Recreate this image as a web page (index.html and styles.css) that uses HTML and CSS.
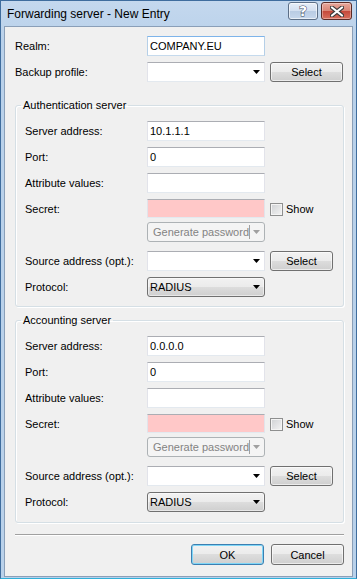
FILE: index.html
```html
<!DOCTYPE html>
<html lang="en">
<head>
  <meta charset="UTF-8" />
  <title>Forwarding server - New Entry</title>
  <link rel="stylesheet" href="styles.css">
</head>
<body>
  <div class="window">
    <div class="titlebar">
      <span class="title">Forwarding server - New Entry</span>
      <div class="caption-buttons">
        <button class="cap help">?</button>
        <button class="cap close">
          <svg width="14" height="11" viewBox="0 0 14 11">
            <path d="M2 1.5L12 9.5M12 1.5L2 9.5" stroke="#3a3a3a" stroke-width="4.2" stroke-linecap="round"/>
            <path d="M2 1.5L12 9.5M12 1.5L2 9.5" stroke="#fff" stroke-width="2.2" stroke-linecap="round"/>
          </svg>
        </button>
      </div>
    </div>

    <div class="client">
      <div class="row first">
        <label class="lbl-top">Realm:</label>
        <div class="textbox focused">COMPANY.EU</div>
      </div>
      <div class="row">
        <label class="lbl-top">Backup profile:</label>
        <div class="textbox combo"><span></span><svg class="arrow" width="7" height="4"><path d="M0 0h7l-3.5 4z" fill="#000"/></svg></div>
        <button class="btn select-wide">Select</button>
      </div>

      <fieldset class="group">
        <legend>Authentication server</legend>
        <div class="row first">
          <label class="lbl">Server address:</label>
          <div class="textbox">10.1.1.1</div>
        </div>
        <div class="row">
          <label class="lbl">Port:</label>
          <div class="textbox">0</div>
        </div>
        <div class="row">
          <label class="lbl">Attribute values:</label>
          <div class="textbox"></div>
        </div>
        <div class="row">
          <label class="lbl">Secret:</label>
          <div class="textbox secret"></div>
          <span class="checkbox"></span>
          <span class="check-label">Show</span>
        </div>
        <div class="row gen-row">
          <span class="lbl"></span>
          <div class="split">
            <span class="split-text">Generate password</span>
            <span class="split-sep"></span>
            <svg class="arrow" width="7" height="4"><path d="M0 0h7l-3.5 4z" fill="#a0a0a0"/></svg>
          </div>
        </div>
        <div class="row source-row">
          <label class="lbl">Source address (opt.):</label>
          <div class="textbox combo"><span></span><svg class="arrow" width="7" height="4"><path d="M0 0h7l-3.5 4z" fill="#000"/></svg></div>
          <button class="btn select">Select</button>
        </div>
        <div class="row">
          <label class="lbl">Protocol:</label>
          <div class="dropdown"><span>RADIUS</span><svg class="arrow" width="7" height="4"><path d="M0 0h7l-3.5 4z" fill="#000"/></svg></div>
        </div>
      </fieldset>

      <fieldset class="group second">
        <legend>Accounting server</legend>
        <div class="row first">
          <label class="lbl">Server address:</label>
          <div class="textbox">0.0.0.0</div>
        </div>
        <div class="row">
          <label class="lbl">Port:</label>
          <div class="textbox">0</div>
        </div>
        <div class="row">
          <label class="lbl">Attribute values:</label>
          <div class="textbox"></div>
        </div>
        <div class="row">
          <label class="lbl">Secret:</label>
          <div class="textbox secret"></div>
          <span class="checkbox"></span>
          <span class="check-label">Show</span>
        </div>
        <div class="row gen-row">
          <span class="lbl"></span>
          <div class="split">
            <span class="split-text">Generate password</span>
            <span class="split-sep"></span>
            <svg class="arrow" width="7" height="4"><path d="M0 0h7l-3.5 4z" fill="#a0a0a0"/></svg>
          </div>
        </div>
        <div class="row source-row">
          <label class="lbl">Source address (opt.):</label>
          <div class="textbox combo"><span></span><svg class="arrow" width="7" height="4"><path d="M0 0h7l-3.5 4z" fill="#000"/></svg></div>
          <button class="btn select">Select</button>
        </div>
        <div class="row">
          <label class="lbl">Protocol:</label>
          <div class="dropdown"><span>RADIUS</span><svg class="arrow" width="7" height="4"><path d="M0 0h7l-3.5 4z" fill="#000"/></svg></div>
        </div>
      </fieldset>

      <div class="separator"></div>

      <div class="actions">
        <button class="btn default">OK</button>
        <button class="btn">Cancel</button>
      </div>
    </div>
  </div>
</body>
</html>
```

FILE: styles.css
```css
* {
  box-sizing: border-box;
}

body {
  margin: 0;
  font-family: 'Liberation Sans', Arial, sans-serif;
  font-size: 11px;
  color: #000;
  background: #fff;
}

.window {
  width: 357px;
  height: 579px;
  display: flex;
  flex-direction: column;
  background: linear-gradient(#c4d8ee, #b9d1ea 40px);
  border: 1px solid #3f6d9e;
  border-bottom-color: #2fb0da;
  padding: 0 3px 1px 3px;
}

/* title bar */
.titlebar {
  height: 25px;
  display: flex;
  align-items: center;
  justify-content: space-between;
  padding: 0 1px 0 3px;
}

.title {
  font-size: 12px;
  color: #000;
}

.caption-buttons {
  display: flex;
  gap: 3px;
  align-self: flex-start;
  margin-top: 1px;
}

.cap {
  height: 18px;
  border: 1px solid #5c6f87;
  border-radius: 3px;
  padding: 0;
  display: flex;
  align-items: center;
  justify-content: center;
  font-family: 'DejaVu Sans', sans-serif;
}

.help {
  width: 30px;
  background: linear-gradient(#e6eef8 0%, #d2dff0 50%, #b8cbe3 50%, #c6d7ec 100%);
  box-shadow: inset 0 0 0 1px rgba(255, 255, 255, 0.6);
  color: #fff;
  font-size: 14px;
  font-weight: bold;
  -webkit-text-stroke: 1px #3c4b5e;
  paint-order: stroke fill;
}

.close {
  width: 31px;
  border-color: #5a2a25;
  background: linear-gradient(#e8a89c 0%, #d98474 50%, #c4483a 50%, #d8705e 100%);
  box-shadow: inset 0 0 0 1px rgba(255, 255, 255, 0.35);
}

/* client area */
.client {
  flex: 1;
  background: #f0f0f0;
  border: 1px solid #8a9fb8;
  padding: 9px 8px 0 10px;
}

.row {
  display: flex;
  align-items: center;
  height: 20px;
  margin-top: 6px;
}

.row.first {
  margin-top: 0;
}

.gen-row {
  margin-top: 3px;
}

.source-row {
  margin-top: 9px;
}

.lbl-top {
  width: 132px;
  flex-shrink: 0;
}

.lbl {
  width: 122px;
  flex-shrink: 0;
}

.textbox {
  width: 118px;
  height: 20px;
  border: 1px solid;
  border-color: #abadb3 #e2e3ea #e3e9ef #e2e3ea;
  background: #fff;
  padding: 0 2px;
  display: flex;
  align-items: center;
}

.textbox.focused {
  border-color: #7eb4ea #b5cfe7 #c5daed #b5cfe7;
}

.textbox.secret {
  background: #ffc8c8;
  height: 19px;
  align-self: flex-start;
}

.combo {
  justify-content: space-between;
  padding-right: 4px;
}

.arrow {
  display: block;
}

.checkbox {
  width: 13px;
  height: 13px;
  margin-left: 5px;
  border: 1px solid #8e8f8f;
  background: linear-gradient(135deg, #cfd1d4, #f4f4f4);
  box-shadow: inset 0 0 0 1px #f4f4f4;
  margin-top: 1px;
}

.check-label {
  margin-left: 3px;
}

.split {
  width: 118px;
  height: 20px;
  border: 1px solid #adb2b5;
  border-radius: 3px;
  background: #f4f4f4;
  color: #838383;
  display: flex;
  align-items: center;
  padding: 0 4px 0 5px;
}

.split-text {
  flex: 1;
}

.split-sep {
  width: 1px;
  height: 14px;
  background: #a0a0a0;
  margin-right: 3px;
}

.dropdown {
  width: 118px;
  height: 20px;
  border: 1px solid #707070;
  border-radius: 3px;
  background: linear-gradient(#f2f2f2 0%, #ebebeb 50%, #dddddd 50%, #cfcfcf 100%);
  box-shadow: inset 0 0 0 1px rgba(255, 255, 255, 0.5);
  display: flex;
  align-items: center;
  justify-content: space-between;
  padding: 0 4px 0 2px;
}

.btn {
  height: 20px;
  border: 1px solid #707070;
  border-radius: 3px;
  background: linear-gradient(#f2f2f2 0%, #ebebeb 50%, #dddddd 50%, #cfcfcf 100%);
  box-shadow: inset 0 0 0 1px rgba(255, 255, 255, 0.6);
  font-family: 'Liberation Sans', Arial, sans-serif;
  font-size: 11px;
  color: #000;
  padding: 0;
}

.select-wide {
  width: 73px;
  margin-left: 5px;
}

.select {
  width: 63px;
  margin-left: 5px;
}

/* group boxes */
.group {
  margin: 16px 0 0 0;
  padding: 9px 9px 9px 9px;
  border: 1px solid #d5dfe5;
  border-radius: 3px;
  box-shadow: inset 1px 1px 0 #fff, 1px 1px 0 #fff;
  min-width: 0;
}

.group.second {
  margin-top: 6px;
  padding-bottom: 10px;
}

.group legend {
  padding: 0 2px;
  margin-left: -4px;
  line-height: 14px;
}

.separator {
  margin-top: 11px;
  border-top: 1px solid #a0a0a0;
  border-bottom: 1px solid #fff;
}

.actions {
  display: flex;
  justify-content: flex-end;
  gap: 7px;
  margin-top: 8px;
}

.actions .btn {
  width: 73px;
  height: 21px;
}

.btn.default {
  border-color: #3c7fb1;
  box-shadow: inset 0 0 0 1px #7fd6f7;
}
```
